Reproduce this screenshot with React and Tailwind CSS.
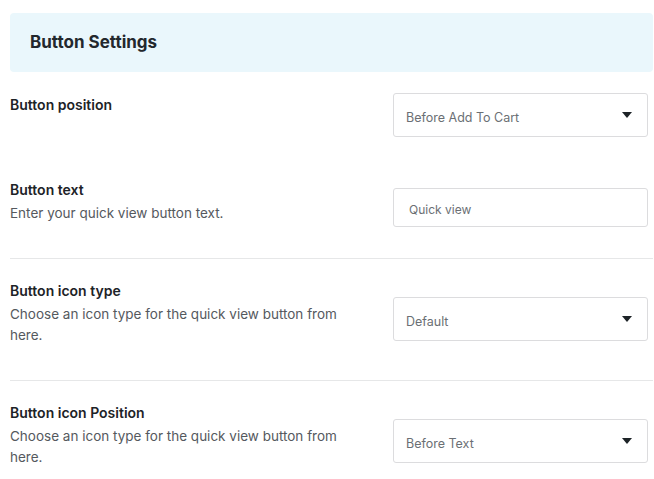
const Caret = () => (
    <svg width="10" height="6" viewBox="0 0 10 6" className="shrink-0">
        <path d="M0 0 L10 0 L5 6 Z" fill="#1d2327" />
    </svg>
);

const SelectBox = ({ value, className }) => (
    <div className={`flex h-[44px] w-[255px] shrink-0 items-center justify-between rounded-[3px] border border-[#dcdcde] bg-white pl-[12px] pr-[15px] ${className}`}>
        <span className="translate-y-[3px] text-[12.5px] text-[#6b6f74]">{value}</span>
        <Caret />
    </div>
);

const App = () => {
    return (
        <section className="min-h-screen bg-white pl-[10px] pr-[1px] pt-[13px] font-['Inter',sans-serif]">
            <div className="flex h-[59px] items-center rounded-[4px] bg-[#eaf7fc] px-[20px]">
                <h2 className="text-[17px] font-bold text-[#23282d]">Button Settings</h2>
            </div>

            <div className="mt-[21px] flex items-start justify-between pr-[5px]">
                <p className="mt-[2px] text-[14px] leading-[20px] font-semibold text-[#1d2327]">Button position</p>
                <SelectBox value="Before Add To Cart" />
            </div>

            <div className="mt-[43px] flex items-start justify-between border-b border-[#e6e7e8] pb-[31px] pr-[5px]">
                <div className="w-[350px]">
                    <p className="text-[14px] leading-[20px] font-semibold text-[#1d2327]">Button text</p>
                    <p className="mt-[3px] text-[13.5px] leading-[21px] text-[#55595e]">Enter your quick view button text.</p>
                </div>
                <div className="mt-[8px] flex h-[39px] w-[255px] shrink-0 items-center rounded-[3px] border border-[#dcdcde] bg-white px-[15px]">
                    <span className="translate-y-[2px] text-[12px] text-[#6b6f74]">Quick view</span>
                </div>
            </div>

            <div className="flex items-start justify-between border-b border-[#e6e7e8] pt-[22px] pb-[34px] pr-[5px]">
                <div className="w-[340px]">
                    <p className="text-[14px] leading-[20px] font-semibold text-[#1d2327]">Button icon type</p>
                    <p className="mt-[3px] text-[13.5px] leading-[21px] text-[#55595e]">Choose an icon type for the quick view button from here.</p>
                </div>
                <SelectBox value="Default" className="mt-[16px]" />
            </div>

            <div className="flex items-start justify-between pt-[22px] pr-[5px]">
                <div className="w-[340px]">
                    <p className="text-[14px] leading-[20px] font-semibold text-[#1d2327]">Button icon Position</p>
                    <p className="mt-[3px] text-[13.5px] leading-[21px] text-[#55595e]">Choose an icon type for the quick view button from here.</p>
                </div>
                <SelectBox value="Before Text" className="mt-[16px]" />
            </div>
        </section>
    );
};

export default App;
